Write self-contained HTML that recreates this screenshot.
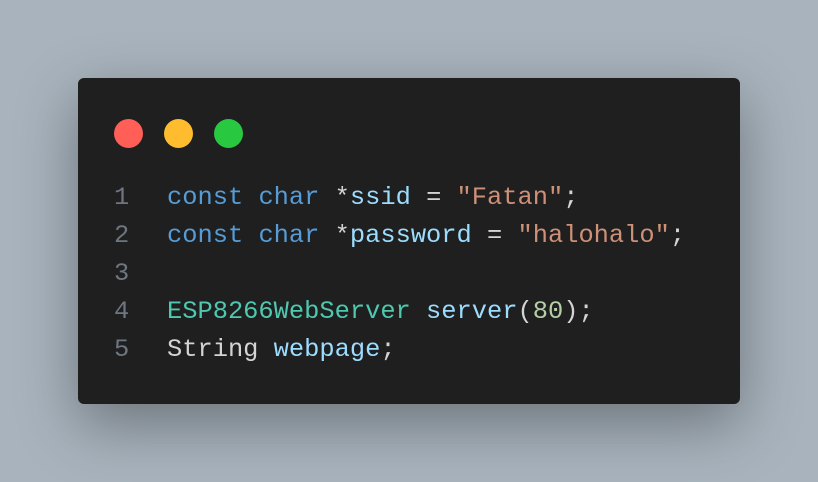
<!DOCTYPE html>
<html><head><style>
html,body{margin:0;padding:0;}
body{width:818px;height:482px;background:#a8b3bd;position:relative;overflow:hidden;}
.card{position:absolute;left:78px;top:78px;width:662px;height:326px;background:#1f1f1f;border-radius:6px;box-shadow:0 20px 60px rgba(0,0,0,0.35);}
.dot{position:absolute;top:119px;width:29px;height:29px;border-radius:50%;}
.code{position:absolute;left:0;top:179px;width:818px;font-family:"Liberation Mono",monospace;font-size:25.4px;line-height:38px;color:#d4d4d4;}
.row{position:relative;height:38px;}
.ln{position:absolute;left:114px;color:#6e7681;}
.tx{position:absolute;left:167px;white-space:pre;}
.k{color:#569cd6}.v{color:#9cdcfe}.s{color:#ce9178}.t{color:#4ec9b0}.f{color:#dcdcaa}.n{color:#b5cea8}
</style></head><body>
<div class="card"></div>
<div class="dot" style="left:114px;background:#ff5f57"></div>
<div class="dot" style="left:164px;background:#febc2e"></div>
<div class="dot" style="left:214px;background:#28c840"></div>
<div class="code"><div class="row"><span class="ln">1</span><span class="tx"><span class="k">const</span> <span class="k">char</span> *<span class="v">ssid</span> = <span class="s">"Fatan"</span>;</span></div><div class="row"><span class="ln">2</span><span class="tx"><span class="k">const</span> <span class="k">char</span> *<span class="v">password</span> = <span class="s">"halohalo"</span>;</span></div><div class="row"><span class="ln">3</span></div><div class="row"><span class="ln">4</span><span class="tx"><span class="t">ESP8266WebServer</span> <span class="v">server</span>(<span class="n">80</span>);</span></div><div class="row"><span class="ln">5</span><span class="tx">String <span class="v">webpage</span>;</span></div></div>
</body></html>
